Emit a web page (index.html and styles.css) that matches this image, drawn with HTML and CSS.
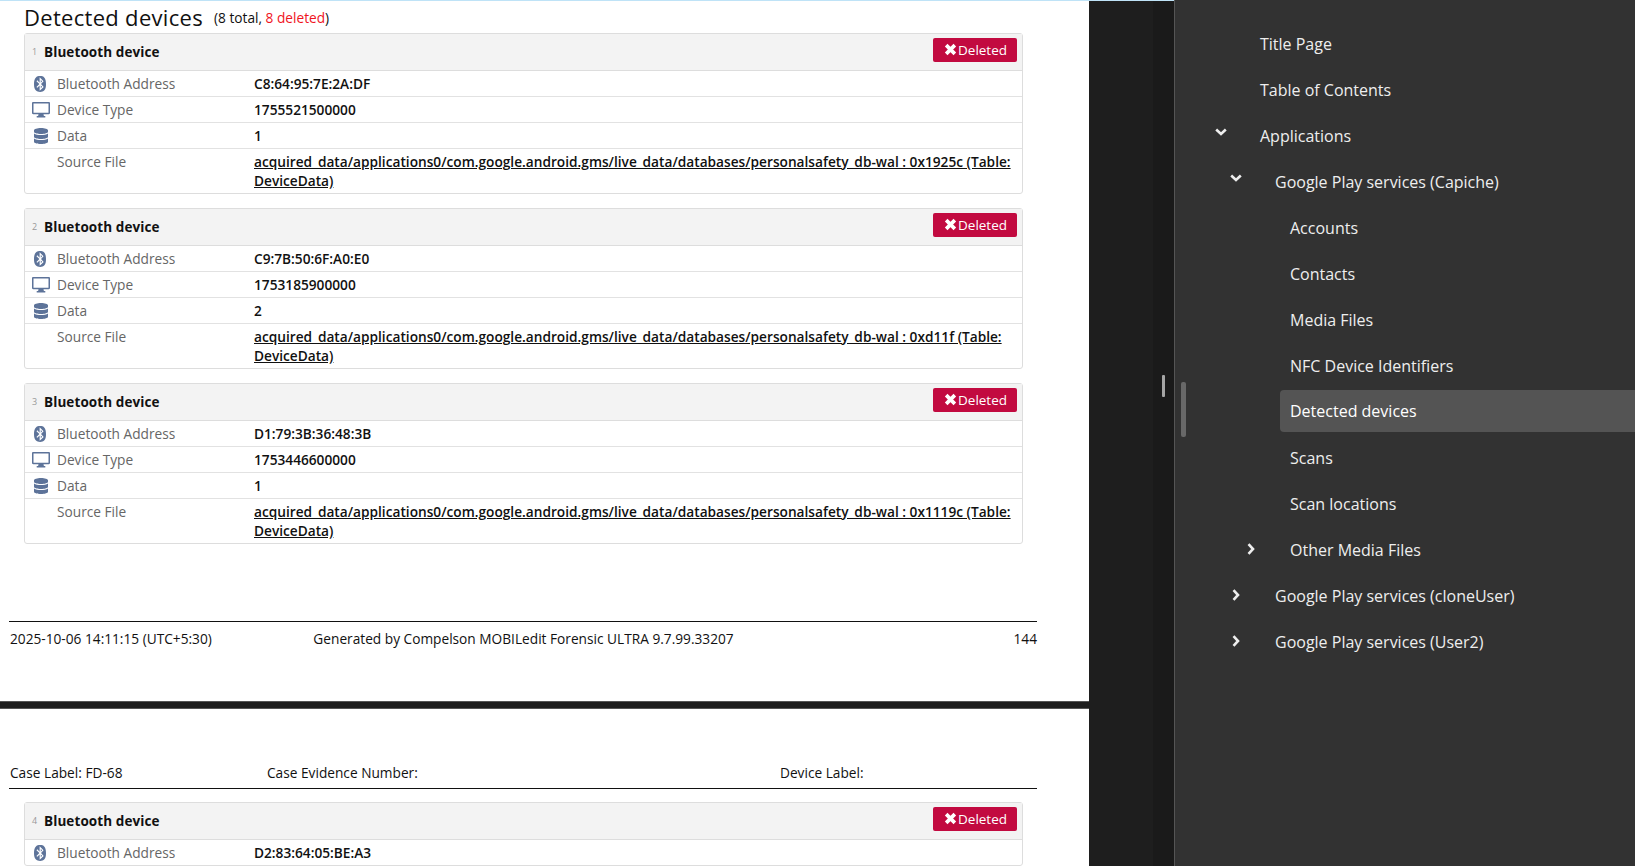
FILE: index.html
```html
<!DOCTYPE html>
<html>
  <head>
    <meta charset="utf-8">
    <title>Detected devices</title>
    <link rel="stylesheet" href="styles.css">
  </head>
  <body>
    <svg class="defs" width="0" height="0">
      <symbol id="i-bt" viewBox="0 0 448 512"><path d="M292.6 171.1L249.7 214l-.3-86 43.2 43.1m-43.2 219.8l43.1-43.1-42.9-42.9-.2 86zM416 259.4C416 465 344.1 512 230.9 512S32 465 32 259.4 115.4 0 228.6 0 416 53.9 416 259.4zm-158.5 0l79.4-88.6L211.8 36.5v176.9L138 139.6l-27 26.9 92.7 93-92.7 93 26.9 26.9 73.8-73.8 2.3 170 127.4-127.5-83.9-88.7z"/></symbol>
      <symbol id="i-pc" viewBox="0 0 18 16"><path fill-rule="evenodd" d="M1.2 0h15.6C17.5 0 18 .5 18 1.2v9.9c0 .7-.5 1.2-1.2 1.2h-5.3l.4 1.7h1.4v1.5H4.700v-1.500h1.400l.4-1.700H1.200C.5 12.300 0 11.800 0 11.100V1.200C0 .5.500 0 1.200 0zM1.500 1.500v9.300h15V1.500z"/></symbol>
      <symbol id="i-db" viewBox="0 0 448 512"><path d="M448 73.143v45.714C448 159.143 347.667 192 224 192S0 159.143 0 118.857V73.143C0 32.857 100.333 0 224 0s224 32.857 224 73.143zM448 176v102.857C448 319.143 347.667 352 224 352S0 319.143 0 278.857V176c48.125 33.143 136.208 48.572 224 48.572S399.874 209.143 448 176zm0 160v102.857C448 479.143 347.667 512 224 512S0 479.143 0 438.857V336c48.125 33.143 136.208 48.572 224 48.572S399.874 369.143 448 336z"/></symbol>
      <symbol id="i-x" viewBox="0 0 12 12"><path d="M2 2l8 8M10 2l-8 8" fill="none" stroke="#fff" stroke-width="3.400"/></symbol>
      <symbol id="i-down" viewBox="0 0 12 8"><path d="M1.200 1.500L6 6l4.800-4.500" fill="none" stroke="#eee" stroke-width="2.600"/></symbol>
      <symbol id="i-right" viewBox="0 0 8 12"><path d="M1.500 1.200L6 6l-4.500 4.800" fill="none" stroke="#eee" stroke-width="2.600"/></symbol>
    </svg>

    <div class="app">

      <div class="viewer">
        <div class="sheet sheet-first">
          <h1 class="title">Detected devices <small>(8 total, <span class="red">8 deleted</span>)</small></h1>

          <div class="card">
            <div class="card-head">
              <span class="num">1</span><b class="card-title">Bluetooth device</b>
              <span class="badge"><svg><use href="#i-x"/></svg>Deleted</span>
            </div>
            <div class="row"><span class="ico"><svg class="i-bt"><use href="#i-bt"/></svg></span><span class="lbl">Bluetooth Address</span><span class="val">C8:64:95:7E:2A:DF</span></div>
            <div class="row"><span class="ico"><svg class="i-pc"><use href="#i-pc"/></svg></span><span class="lbl">Device Type</span><span class="val">1755521500000</span></div>
            <div class="row"><span class="ico"><svg class="i-db"><use href="#i-db"/></svg></span><span class="lbl">Data</span><span class="val">1</span></div>
            <div class="row"><span class="ico"></span><span class="lbl">Source File</span><span class="val"><a>acquired_data/applications0/com.google.android.gms/live_data/databases/personalsafety_db-wal : 0x1925c (Table: DeviceData)</a></span></div>
          </div>

          <div class="card">
            <div class="card-head">
              <span class="num">2</span><b class="card-title">Bluetooth device</b>
              <span class="badge"><svg><use href="#i-x"/></svg>Deleted</span>
            </div>
            <div class="row"><span class="ico"><svg class="i-bt"><use href="#i-bt"/></svg></span><span class="lbl">Bluetooth Address</span><span class="val">C9:7B:50:6F:A0:E0</span></div>
            <div class="row"><span class="ico"><svg class="i-pc"><use href="#i-pc"/></svg></span><span class="lbl">Device Type</span><span class="val">1753185900000</span></div>
            <div class="row"><span class="ico"><svg class="i-db"><use href="#i-db"/></svg></span><span class="lbl">Data</span><span class="val">2</span></div>
            <div class="row"><span class="ico"></span><span class="lbl">Source File</span><span class="val"><a>acquired_data/applications0/com.google.android.gms/live_data/databases/personalsafety_db-wal : 0xd11f (Table: DeviceData)</a></span></div>
          </div>

          <div class="card">
            <div class="card-head">
              <span class="num">3</span><b class="card-title">Bluetooth device</b>
              <span class="badge"><svg><use href="#i-x"/></svg>Deleted</span>
            </div>
            <div class="row"><span class="ico"><svg class="i-bt"><use href="#i-bt"/></svg></span><span class="lbl">Bluetooth Address</span><span class="val">D1:79:3B:36:48:3B</span></div>
            <div class="row"><span class="ico"><svg class="i-pc"><use href="#i-pc"/></svg></span><span class="lbl">Device Type</span><span class="val">1753446600000</span></div>
            <div class="row"><span class="ico"><svg class="i-db"><use href="#i-db"/></svg></span><span class="lbl">Data</span><span class="val">1</span></div>
            <div class="row"><span class="ico"></span><span class="lbl">Source File</span><span class="val"><a>acquired_data/applications0/com.google.android.gms/live_data/databases/personalsafety_db-wal : 0x1119c (Table: DeviceData)</a></span></div>
          </div>

          <div class="page-foot">
            <span>2025-10-06 14:11:15 (UTC+5:30)</span>
            <span>Generated by Compelson MOBILedit Forensic ULTRA 9.7.99.33207</span>
            <span class="page-no">144</span>
          </div>
        </div>

        <div class="sheet sheet-next">
          <div class="page-head">
            <span>Case Label: FD-68</span>
            <span>Case Evidence Number:</span>
            <span>Device Label:</span>
          </div>

          <div class="card">
            <div class="card-head">
              <span class="num">4</span><b class="card-title">Bluetooth device</b>
              <span class="badge"><svg><use href="#i-x"/></svg>Deleted</span>
            </div>
            <div class="row"><span class="ico"><svg class="i-bt"><use href="#i-bt"/></svg></span><span class="lbl">Bluetooth Address</span><span class="val">D2:83:64:05:BE:A3</span></div>
          </div>
        </div>
      </div>

      <div class="gutter">
        <div class="grip"></div>
      </div>

      <div class="side">
        <div class="thumb"></div>
        <ul class="tree">
          <li class="lv0">Title Page</li>
          <li class="lv0">Table of Contents</li>
          <li class="lv0"><svg class="tw tw-down"><use href="#i-down"/></svg>Applications</li>
          <li class="lv1"><svg class="tw tw-down"><use href="#i-down"/></svg>Google Play services (Capiche)</li>
          <li class="lv2">Accounts</li>
          <li class="lv2">Contacts</li>
          <li class="lv2">Media Files</li>
          <li class="lv2">NFC Device Identifiers</li>
          <li class="lv2 on"><span class="pill">Detected devices</span></li>
          <li class="lv2">Scans</li>
          <li class="lv2">Scan locations</li>
          <li class="lv2"><svg class="tw tw-right"><use href="#i-right"/></svg>Other Media Files</li>
          <li class="lv1"><svg class="tw tw-right"><use href="#i-right"/></svg>Google Play services (cloneUser)</li>
          <li class="lv1"><svg class="tw tw-right"><use href="#i-right"/></svg>Google Play services (User2)</li>
        </ul>
      </div>

    </div>
  </body>
</html>
```

FILE: styles.css
```css
html, body {
  margin: 0;
  height: 100%;
  overflow: hidden;
  background: #1e1e1e;
}

.defs {
  position: absolute;
}

.app {
  display: flex;
  height: 866px;
  font-family: "Open Sans", "Noto Sans", sans-serif;
  font-size: 13.700px;
  color: #111;
}

/* document pane */
.viewer {
  width: 1089px;
  flex: none;
  overflow: hidden;
  border-top: 1px solid #bfe3f7;
  box-sizing: border-box;
}

.sheet {
  background: #fff;
  padding: 0 52px 0 9px;
}

.sheet-first {
  height: 701px;
  box-sizing: border-box;
  border-bottom: 1px solid #555;
}

.sheet-next {
  border-top: 1px solid #555;
  margin-top: 6px;
  padding-top: 54px;
  height: 300px;
}

.title {
  margin: 0;
  padding: 2px 0 0 15px;
  height: 29px;
  box-sizing: border-box;
  font-size: 22px;
  font-weight: 400;
  line-height: 29px;
  letter-spacing: 0.3px;
  color: #111;
}

.title small {
  font-size: 13.700px;
  margin-left: 5px;
  letter-spacing: 0;
  position: relative;
  top: -3px;
}

.red {
  color: #f0141e;
}

.card {
  width: 999px;
  margin: 3px 0 14px 15px;
  box-sizing: border-box;
  border: 1px solid #ddd;
  border-radius: 3px;
  background: #fff;
}

.card-head {
  display: flex;
  align-items: center;
  height: 37px;
  box-sizing: border-box;
  padding: 0 5px 1px 7px;
  background: #f3f3f3;
  border-bottom: 1px solid #ddd;
}

.num {
  width: 12px;
  font-size: 9px;
  color: #999;
}

.card-title {
  font-size: 13.500px;
  font-weight: 700;
  letter-spacing: 0.1px;
}

.badge {
  margin: 0 0 3px auto;
  display: flex;
  align-items: center;
  height: 24px;
  width: 84px;
  box-sizing: border-box;
  padding-left: 11px;
  background: #c20a40;
  border-radius: 2px;
  color: #fff;
  font-size: 13.500px;
}

.badge svg {
  width: 13px;
  height: 13px;
  margin: -2px 1px 0 0;
}

.row {
  display: flex;
  line-height: 19px;
  padding: 3px 0;
  border-bottom: 1px solid #e2e2e2;
}

.row:last-child {
  border-bottom: 0;
}

.ico {
  width: 32px;
  flex: none;
  display: flex;
  justify-content: center;
  align-items: center;
  height: 19px;
  fill: #5d7399;
}

.i-bt {
  width: 14px;
  height: 16px;
  margin-right: 3px;
}

.i-pc {
  width: 18px;
  height: 16px;
}

.i-db {
  width: 14px;
  height: 16px;
}

.lbl {
  width: 197px;
  flex: none;
  color: #666;
}

.val {
  font-weight: 600;
  color: #111;
  padding-right: 8px;
}

.val a {
  text-decoration: underline;
}

.page-foot {
  display: grid;
  grid-template-columns: 1fr auto 1fr;
  margin-top: 77px;
  padding: 7px 0 0 1px;
  border-top: 1px solid #111;
  line-height: 19px;
}

.page-no {
  text-align: right;
}

.page-head {
  display: grid;
  grid-template-columns: 257px 513px 1fr;
  line-height: 19px;
  padding: 0 0 6px 1px;
  border-bottom: 1px solid #111;
  margin-bottom: 13px;
}

/* middle strip */
.gutter {
  position: relative;
  width: 85px;
  flex: none;
  border-top: 1px solid #bfe3f7;
  box-sizing: border-box;
  background: linear-gradient(to right, #1e1e1e 64px, #1a1a1a 64px);
}

.grip {
  position: absolute;
  left: 73px;
  top: 374px;
  width: 3px;
  height: 22px;
  border-radius: 1px;
  background: #a5a5a5;
}

/* bookmarks pane */
.side {
  position: relative;
  flex: 1;
  background: #323232;
  border-left: 1px solid #555;
  color: #eee;
  font-size: 16px;
}

.thumb {
  position: absolute;
  left: 6px;
  top: 382px;
  width: 5px;
  height: 55px;
  border-radius: 2px;
  background: #686868;
}

.tree {
  list-style: none;
  margin: 0;
  padding: 21px 0 0;
}

.tree li {
  position: relative;
  height: 46px;
  line-height: 46px;
  white-space: nowrap;
}

.lv0 {
  padding-left: 85px;
}

.lv1 {
  padding-left: 100px;
}

.lv2 {
  padding-left: 115px;
}

.tree .on {
  box-sizing: border-box;
  padding: 1px 0 0 105px;
}

.pill {
  display: block;
  height: 42px;
  line-height: 43px;
  padding-left: 10px;
  background: #545454;
  border-radius: 4px 0 0 4px;
  color: #fff;
}

.tw {
  position: absolute;
  top: 50%;
}

.tw-down {
  width: 12px;
  height: 8px;
  margin-top: -8px;
  margin-left: -45px;
}

.tw-right {
  width: 8px;
  height: 12px;
  margin-top: -7px;
  margin-left: -43px;
}
```
